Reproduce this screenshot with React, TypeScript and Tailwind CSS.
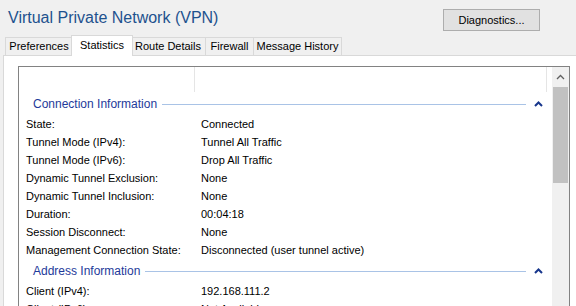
import React from "react";

const connectionRows: [string, string][] = [
  ["State:", "Connected"],
  ["Tunnel Mode (IPv4):", "Tunnel All Traffic"],
  ["Tunnel Mode (IPv6):", "Drop All Traffic"],
  ["Dynamic Tunnel Exclusion:", "None"],
  ["Dynamic Tunnel Inclusion:", "None"],
  ["Duration:", "00:04:18"],
  ["Session Disconnect:", "None"],
  ["Management Connection State:", "Disconnected (user tunnel active)"],
];

const addressRows: [string, string][] = [
  ["Client (IPv4):", "192.168.111.2"],
  ["Client (IPv6):", "Not Available"],
  ["Server:", "10.0.0.1"],
];

const tabs = [
  { label: "Preferences", width: "w-[68px]" },
  { label: "Statistics", width: "w-[58px]", active: true },
  { label: "Route Details", width: "w-[75px]" },
  { label: "Firewall", width: "w-[48px]" },
  { label: "Message History", width: "w-[88px]" },
];

function Chevron() {
  return (
    <svg width="9" height="6" viewBox="0 0 9 6" className="shrink-0">
      <polyline points="1,5 4.5,1.5 8,5" fill="none" stroke="#17368c" strokeWidth="2" />
    </svg>
  );
}

function GroupHeader({ title }: { title: string }) {
  return (
    <div className="flex shrink-0 items-center h-[18px] mt-[3px] mb-[2px] pl-[14px] pr-[9px]">
      <span className="text-[12px] text-[#1e3a9a] whitespace-nowrap">{title}</span>
      <div className="flex-1 h-px bg-[#a9c3e6] ml-[5px] mr-[8px]" />
      <Chevron />
    </div>
  );
}

function Row({ label, value }: { label: string; value: string }) {
  return (
    <div className="flex shrink-0 h-[18px] items-center pl-[7px] text-[11px] text-black whitespace-nowrap">
      <span className="w-[175px]">{label}</span>
      <span>{value}</span>
    </div>
  );
}

export default function App() {
  return (
    <div
      className="w-[576px] h-[306px] overflow-hidden bg-[#f0f0f0] flex flex-col"
      style={{ fontFamily: "'Liberation Sans', Arial, sans-serif" }}
    >
      {/* title bar area */}
      <div className="flex items-start h-[35px] shrink-0">
        <h1 className="ml-[8px] mt-[6px] text-[16px] leading-[24px] text-[#1e528e] whitespace-nowrap">
          Virtual Private Network (VPN)
        </h1>
        <button className="ml-auto mr-[36px] mt-[9px] w-[97px] h-[22px] bg-[#e1e1e1] border border-[#adadad] text-[11px] text-black">
          Diagnostics...
        </button>
      </div>

      {/* tabs */}
      <div className="flex items-end pl-[5px] h-[21px] relative z-10 -mb-px shrink-0">
        {tabs.map((t, i) =>
          t.active ? (
            <div
              key={t.label}
              className="w-[62px] -mx-[2px] h-[21px] bg-white border border-b-0 border-[#d9d9d9] flex items-center justify-center text-[11px] text-black relative z-10 pb-[2px] whitespace-nowrap"
            >
              {t.label}
            </div>
          ) : (
            <div
              key={t.label}
              className={`${t.width} h-[19px] bg-[#f0f0f0] border-t border-r border-b border-[#d9d9d9] ${
                i === 0 ? "border-l" : ""
              } flex items-center justify-center text-[11px] text-black whitespace-nowrap`}
            >
              {t.label}
            </div>
          )
        )}
      </div>

      {/* tab panel */}
      <div className="ml-[3px] flex-1 bg-white border-l border-t border-[#d9d9d9] pl-[14px] pt-[10px]">
        <div className="w-[552px] border border-[#828282] bg-white flex">
          <div className="flex-1 flex flex-col">
            <div className="flex h-[25px] shrink-0">
              <div className="w-[176px] border-r border-[#e5e5e5]" />
              <div className="w-[352px] border-r border-[#e5e5e5]" />
            </div>
            <GroupHeader title="Connection Information" />
            {connectionRows.map(([l, v]) => (
              <Row key={l} label={l} value={v} />
            ))}
            <GroupHeader title="Address Information" />
            {addressRows.map(([l, v]) => (
              <Row key={l} label={l} value={v} />
            ))}
          </div>
          {/* scrollbar */}
          <div className="w-[17px] bg-[#f0f0f0] flex flex-col">
            <div className="h-[20px] flex items-center justify-center">
              <svg width="9" height="6" viewBox="0 0 9 6">
                <polyline points="1,5 4.5,1.5 8,5" fill="none" stroke="#606060" strokeWidth="1.3" />
              </svg>
            </div>
            <div className="h-[96px] mx-px bg-[#c1c1c1]" />
          </div>
        </div>
      </div>
    </div>
  );
}
